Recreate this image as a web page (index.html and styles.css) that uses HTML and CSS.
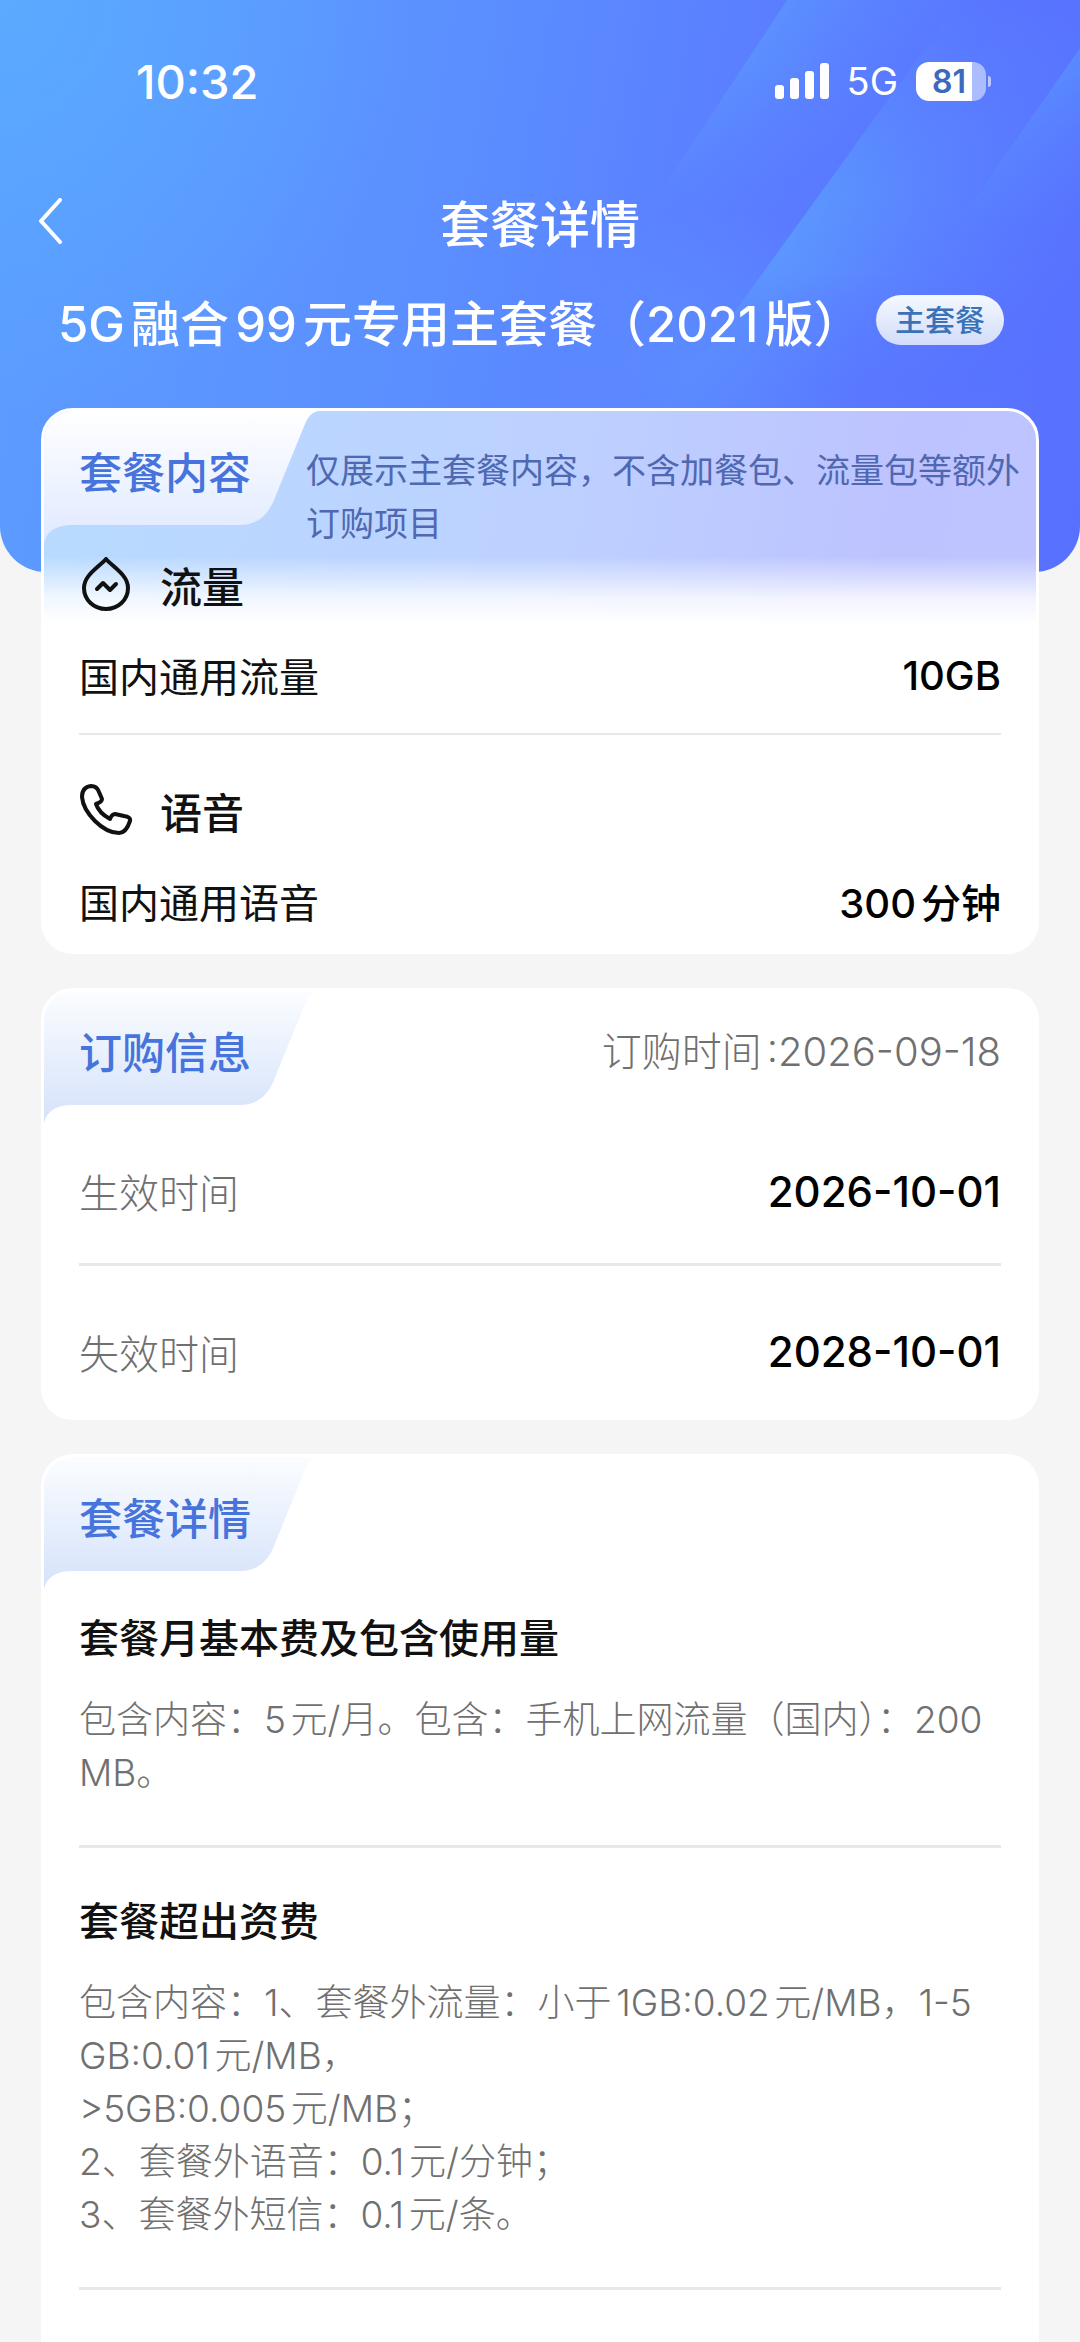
FILE: index.html
```html
<!DOCTYPE html>
<html lang="zh-CN">
<head>
    <meta charset="UTF-8">
    <meta name="viewport" content="width=device-width, initial-scale=1.0">
    <title>套餐详情</title>
    <link rel="stylesheet" href="styles.css">
</head>
<body>
    <header class="header">
        <!-- Diagonal light bands -->
        <svg class="header-bg" viewBox="0 0 1080 572" preserveAspectRatio="none" aria-hidden="true">
            <defs>
                <linearGradient id="band1" gradientUnits="userSpaceOnUse" x1="740" y1="60" x2="900" y2="170">
                    <stop offset="0" stop-color="#5c92ff" stop-opacity="0.9"/>
                    <stop offset="1" stop-color="#5a7dff" stop-opacity="0"/>
                </linearGradient>
                <linearGradient id="fade1" x1="0" y1="0" x2="0" y2="1">
                    <stop offset="0" stop-color="#fff"/>
                    <stop offset="0.3" stop-color="#fff"/>
                    <stop offset="1" stop-color="#000"/>
                </linearGradient>
                <linearGradient id="band2" gradientUnits="userSpaceOnUse" x1="800" y1="220" x2="1020" y2="380">
                    <stop offset="0" stop-color="#5c98ff"/>
                    <stop offset="1" stop-color="#5a78ff" stop-opacity="0"/>
                </linearGradient>
                <linearGradient id="fade2" x1="0" y1="0" x2="0" y2="1">
                    <stop offset="0" stop-color="#000"/>
                    <stop offset="0.25" stop-color="#555"/>
                    <stop offset="0.5" stop-color="#ddd"/>
                    <stop offset="0.7" stop-color="#fff"/>
                    <stop offset="1" stop-color="#000"/>
                </linearGradient>
                <linearGradient id="band3" gradientUnits="userSpaceOnUse" x1="1025" y1="120" x2="1110" y2="180">
                    <stop offset="0" stop-color="#5a90ff" stop-opacity="0.8"/>
                    <stop offset="1" stop-color="#5a80ff" stop-opacity="0.3"/>
                </linearGradient>
                <radialGradient id="glow" gradientUnits="userSpaceOnUse" cx="690" cy="370" r="170">
                    <stop offset="0" stop-color="#5c8eff" stop-opacity="0.8"/>
                    <stop offset="1" stop-color="#5c8eff" stop-opacity="0"/>
                </radialGradient>
                <mask id="mask1"><rect width="1080" height="220" fill="url(#fade1)"/></mask>
                <mask id="mask2"><rect width="1080" height="390" fill="url(#fade2)"/></mask>
                <mask id="mask3"><rect width="1080" height="240" fill="url(#fade1)"/></mask>
            </defs>
            <path d="M787 0H1040L880 220H642Z" fill="url(#band1)" mask="url(#mask1)"/>
            <path d="M960 0H1080V440H642Z" fill="url(#band2)" mask="url(#mask2)"/>
            <path d="M1080 48V240H946Z" fill="url(#band3)" mask="url(#mask3)"/>
            <circle cx="690" cy="370" r="170" fill="url(#glow)"/>
        </svg>

        <div class="status-bar">
            <span class="status-time">10:32</span>
            <div class="status-icons">
                <svg class="signal" viewBox="0 0 54 36" fill="#fff" aria-hidden="true">
                    <rect x="0" y="22" width="9" height="14" rx="3"/>
                    <rect x="15" y="15" width="9" height="21" rx="3"/>
                    <rect x="30" y="8" width="9" height="28" rx="3"/>
                    <rect x="45" y="0" width="9" height="36" rx="3"/>
                </svg>
                <span class="network">5G</span>
                <span class="battery">81</span>
            </div>
        </div>

        <nav class="nav-bar">
            <button class="back-button" type="button" aria-label="返回">
                <svg viewBox="0 0 24 46" fill="none" stroke="#fff" stroke-width="4" stroke-linecap="round" stroke-linejoin="round">
                    <path d="M22 2L3 23L22 44"/>
                </svg>
            </button>
            <h1>套餐详情</h1>
        </nav>

        <div class="plan">
            <span class="plan-name">5G融合99元专用主套餐（2021版）</span>
            <span class="plan-badge">主套餐</span>
        </div>
    </header>

    <main class="content">
        <section class="card card-plan">
            <div class="card-head">
                <svg class="tab-bg" viewBox="0 0 274 132" aria-hidden="true">
                    <defs>
                        <linearGradient id="tabLight" x1="0" y1="0" x2="0" y2="1">
                            <stop offset="0" stop-color="#ffffff"/>
                            <stop offset="1" stop-color="#dfe9ff"/>
                        </linearGradient>
                    </defs>
                    <path d="M0 0H274Q265 2 261 13L232 84Q222 114 196 114H26Q4 115 0 132Z" fill="url(#tabLight)"/>
                </svg>
                <h2>套餐内容</h2>
                <p class="card-note">仅展示主套餐内容，不含加餐包、流量包等额外订购项目</p>
            </div>
            <div class="usage">
                <h3>
                    <svg class="icon" viewBox="0 0 54 54" fill="none" stroke="#111" stroke-width="4" stroke-linecap="round" stroke-linejoin="round" aria-hidden="true">
                        <path d="M27 2C20 10 5 18 5 31C5 43 15 52 27 52S49 43 49 31C49 18 34 10 27 2Z"/>
                        <path d="M18 32L24 26L31 33L37 27"/>
                    </svg>
                    流量
                </h3>
                <div class="row">
                    <span>国内通用流量</span>
                    <strong>10GB</strong>
                </div>
            </div>
            <div class="usage">
                <h3>
                    <svg class="icon" viewBox="0 0 54 54" fill="none" stroke="#111" stroke-width="4" stroke-linecap="round" stroke-linejoin="round" aria-hidden="true">
                        <path d="M12 3Q18 3 20 9L23 16Q23 19 17 21Q20 30 31 36Q33 31 36 31L45 33Q52 34 51 38Q47 50 40 50Q28 50 16 38Q4 26 3 14Q3 4 12 3Z"/>
                    </svg>
                    语音
                </h3>
                <div class="row">
                    <span>国内通用语音</span>
                    <strong>300分钟</strong>
                </div>
            </div>
        </section>

        <section class="card">
            <div class="card-head">
                <svg class="tab-bg" viewBox="0 0 274 132" aria-hidden="true">
                    <defs>
                        <linearGradient id="tabBlue" x1="0" y1="0" x2="0" y2="1">
                            <stop offset="0" stop-color="#fbfdff"/>
                            <stop offset="1" stop-color="#d5e2fb"/>
                        </linearGradient>
                    </defs>
                    <path d="M0 0H274Q265 2 261 13L232 84Q222 114 196 114H26Q4 115 0 132Z" fill="url(#tabBlue)"/>
                </svg>
                <h2>订购信息</h2>
                <p class="order-time">订购时间:2026-09-18</p>
            </div>
            <div class="row row-date">
                <span>生效时间</span>
                <strong>2026-10-01</strong>
            </div>
            <div class="row row-date">
                <span>失效时间</span>
                <strong>2028-10-01</strong>
            </div>
        </section>

        <section class="card card-last">
            <div class="card-head">
                <svg class="tab-bg" viewBox="0 0 274 132" aria-hidden="true">
                    <path d="M0 0H274Q265 2 261 13L232 84Q222 114 196 114H26Q4 115 0 132Z" fill="url(#tabBlue)"/>
                </svg>
                <h2>套餐详情</h2>
            </div>
            <article class="detail">
                <h3>套餐月基本费及包含使用量</h3>
                <p>包含内容：5元/月。包含：手机上网流量（国内）：200MB。</p>
            </article>
            <article class="detail">
                <h3>套餐超出资费</h3>
                <p>包含内容：1、套餐外流量：小于1GB:0.02元/MB，1-5GB:0.01元/MB，<br>&gt;5GB:0.005元/MB；<br>2、套餐外语音：0.1元/分钟；<br>3、套餐外短信：0.1元/条。</p>
            </article>
        </section>
    </main>
</body>
</html>
```
FILE: styles.css
```css
* {
    box-sizing: border-box;
}

body {
    margin: 0;
    min-height: 100vh;
    display: flex;
    flex-direction: column;
    background-color: #f5f5f5;
    color: #111;
    font-family: Inter, "Noto Sans CJK SC", sans-serif;
    text-autospace: normal;
}

h1, h2, h3, p {
    margin: 0;
    font-weight: 500;
}

/* Header */
.header {
    position: relative;
    overflow: hidden;
    padding: 52px 38px 216px;
    border-radius: 0 0 46px 46px;
    background: radial-gradient(circle at 0 0, #5aaaff 0, rgba(90, 170, 255, 0) 420px),
        linear-gradient(100deg, #5c9dff 0%, #5b8fff 40%, #5a7bff 70%, #5870ff 100%);
    color: #fff;
}

.header-bg {
    position: absolute;
    top: 0;
    left: 0;
    width: 100%;
    height: 100%;
}

.status-bar {
    position: relative;
    display: flex;
    align-items: center;
    justify-content: space-between;
    height: 58px;
    padding: 0 56px 0 98px;
}

.status-time {
    font-size: 47px;
    font-weight: 500;
}

.status-icons {
    display: flex;
    align-items: center;
    gap: 18px;
}

.signal {
    width: 54px;
    height: 36px;
}

.network {
    font-size: 38px;
}

.battery {
    position: relative;
    width: 70px;
    height: 39px;
    padding-right: 4px;
    border-radius: 13px;
    background: linear-gradient(90deg, #fff 80%, rgba(255, 255, 255, 0.5) 80%);
    color: #3c68bd;
    font-size: 32px;
    font-weight: 600;
    line-height: 39px;
    text-align: center;
}

.battery::after {
    content: "";
    position: absolute;
    top: 14px;
    right: -5px;
    width: 3px;
    height: 11px;
    border-radius: 0 3px 3px 0;
    background-color: rgba(255, 255, 255, 0.6);
}

.nav-bar {
    position: relative;
    display: grid;
    grid-template-columns: 60px 1fr 60px;
    align-items: center;
    height: 100px;
    margin-top: 61px;
}

.nav-bar h1 {
    font-size: 50px;
    text-align: center;
}

.back-button {
    width: 60px;
    height: 60px;
    padding: 0;
    border: none;
    background: none;
    cursor: pointer;
    text-align: left;
}

.back-button svg {
    display: block;
    width: 24px;
    height: 46px;
}

.plan {
    position: relative;
    display: flex;
    align-items: center;
    justify-content: space-between;
    height: 72px;
    margin-top: 13px;
    padding: 0 38px 0 20px;
}

.plan-name {
    font-size: 49px;
    font-weight: 500;
    white-space: nowrap;
}

.plan-badge {
    height: 50px;
    padding: 0 19px;
    border-radius: 25px;
    background: linear-gradient(180deg, #f4f9ff, #d3dcfa);
    color: #3a72b8;
    font-size: 30px;
    font-weight: 500;
    line-height: 50px;
    white-space: nowrap;
}

/* Cards */
.content {
    position: relative;
    flex: 1;
    display: flex;
    flex-direction: column;
    gap: 34px;
    margin-top: -164px;
    padding: 0 41px;
}

.card {
    border: 3px solid #fff;
    border-radius: 32px;
    background-color: #fff;
    padding: 0 35px;
}

.card-plan {
    background: linear-gradient(180deg, rgba(255, 255, 255, 0) 145px, rgba(255, 255, 255, 0.8) 187px, #fff 212px),
        linear-gradient(100deg, #b8dbff 0%, #bdd0ff 50%, #bdc3ff 80%, #bdc5ff 100%);
}

.card-head {
    position: relative;
    display: flex;
    align-items: flex-start;
    justify-content: space-between;
    min-height: 132px;
    padding-top: 31px;
}

.card-head h2 {
    position: relative;
    color: #4774dc;
    font-size: 43px;
    line-height: 62px;
    white-space: nowrap;
}

.tab-bg {
    position: absolute;
    top: 0;
    left: -35px;
    width: 274px;
    height: 132px;
    border-top-left-radius: 29px;
}

.card-note {
    flex: 1;
    margin: 2px -23px 0 55px;
    color: #5068b0;
    font-size: 34px;
    font-weight: 400;
    line-height: 53px;
}

.order-time {
    color: #707070;
    font-size: 40px;
    font-weight: 300;
    line-height: 60px;
}

.usage {
    padding-top: 3px;
    padding-bottom: 28px;
}

.usage + .usage {
    padding-top: 44px;
    padding-bottom: 20px;
    border-top: 2px solid #e8e8e8;
}

.usage h3 {
    display: flex;
    align-items: center;
    gap: 27px;
    height: 62px;
    font-size: 42px;
}

.icon {
    width: 54px;
    height: 54px;
}

.row {
    display: flex;
    align-items: center;
    justify-content: space-between;
    height: 60px;
    margin-top: 30px;
    font-size: 40px;
}

.row strong {
    color: #000;
    font-weight: 500;
}

.row-date {
    height: 140px;
    margin-top: 0;
    padding-bottom: 4px;
    color: #707070;
    font-weight: 300;
}

.row-date strong {
    font-size: 42px;
}

.row-date + .row-date {
    height: 154px;
    padding-top: 46px;
    padding-bottom: 26px;
    border-top: 3px solid #e8e8e8;
}

.card-last {
    flex: 1;
    border-bottom: none;
    border-radius: 32px 32px 0 0;
}

/* Plan details */
.detail {
    padding: 20px 0 46px;
    border-bottom: 3px solid #e8e8e8;
}

.detail + .detail {
    padding-top: 44px;
}

.detail h3 {
    font-size: 40px;
    line-height: 60px;
}

.detail p {
    margin-top: 24px;
    padding-right: 12px;
    color: #707070;
    font-size: 37px;
    font-weight: 300;
    line-height: 53px;
    word-break: break-all;
}
```
